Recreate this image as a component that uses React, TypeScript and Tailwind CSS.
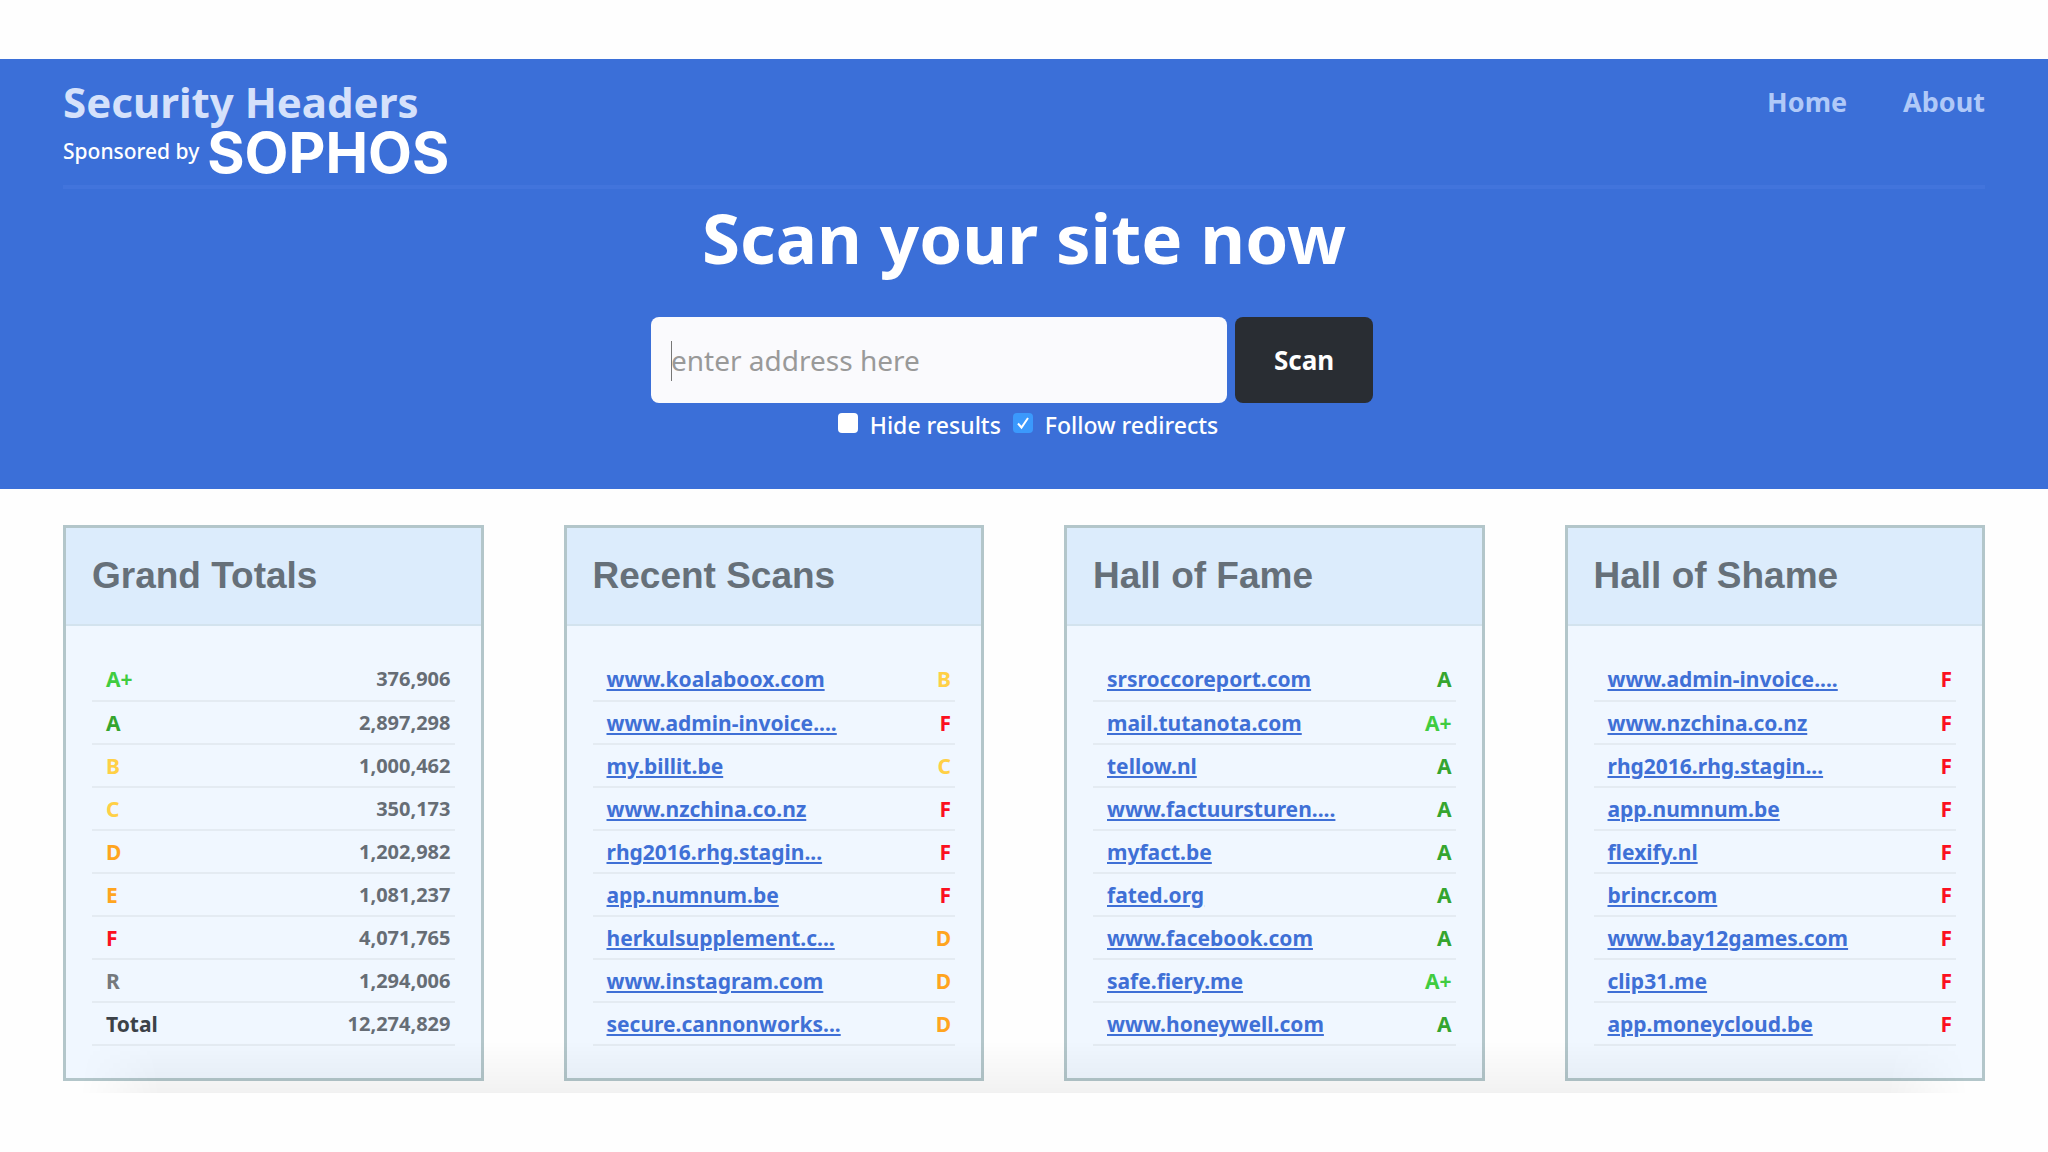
import classNames from 'clsx';

type Grade = 'A+' | 'A' | 'B' | 'C' | 'D' | 'E' | 'F' | 'R' | 'Total';

interface Scan {
  site: string;
  grade: Grade;
}

const gradeColors: Record<Grade, string> = {
  'A+': 'text-[#40cc40]',
  A: 'text-[#35a52f]',
  B: 'text-[#ffd046]',
  C: 'text-[#ffd046]',
  D: 'text-[#ffa51f]',
  E: 'text-[#ffa51f]',
  F: 'text-[#fb1020]',
  R: 'text-[#75797d]',
  Total: 'text-[#3c4248]',
};

const totals: { grade: Grade; count: string }[] = [
  { grade: 'A+', count: '376,906' },
  { grade: 'A', count: '2,897,298' },
  { grade: 'B', count: '1,000,462' },
  { grade: 'C', count: '350,173' },
  { grade: 'D', count: '1,202,982' },
  { grade: 'E', count: '1,081,237' },
  { grade: 'F', count: '4,071,765' },
  { grade: 'R', count: '1,294,006' },
  { grade: 'Total', count: '12,274,829' },
];

const recentScans: Scan[] = [
  { site: 'www.koalaboox.com', grade: 'B' },
  { site: 'www.admin-invoice....', grade: 'F' },
  { site: 'my.billit.be', grade: 'C' },
  { site: 'www.nzchina.co.nz', grade: 'F' },
  { site: 'rhg2016.rhg.stagin...', grade: 'F' },
  { site: 'app.numnum.be', grade: 'F' },
  { site: 'herkulsupplement.c...', grade: 'D' },
  { site: 'www.instagram.com', grade: 'D' },
  { site: 'secure.cannonworks...', grade: 'D' },
];

const hallOfFame: Scan[] = [
  { site: 'srsroccoreport.com', grade: 'A' },
  { site: 'mail.tutanota.com', grade: 'A+' },
  { site: 'tellow.nl', grade: 'A' },
  { site: 'www.factuursturen....', grade: 'A' },
  { site: 'myfact.be', grade: 'A' },
  { site: 'fated.org', grade: 'A' },
  { site: 'www.facebook.com', grade: 'A' },
  { site: 'safe.fiery.me', grade: 'A+' },
  { site: 'www.honeywell.com', grade: 'A' },
];

const hallOfShame: Scan[] = [
  { site: 'www.admin-invoice....', grade: 'F' },
  { site: 'www.nzchina.co.nz', grade: 'F' },
  { site: 'rhg2016.rhg.stagin...', grade: 'F' },
  { site: 'app.numnum.be', grade: 'F' },
  { site: 'flexify.nl', grade: 'F' },
  { site: 'brincr.com', grade: 'F' },
  { site: 'www.bay12games.com', grade: 'F' },
  { site: 'clip31.me', grade: 'F' },
  { site: 'app.moneycloud.be', grade: 'F' },
];

function Card({
  title,
  children,
}: {
  title: string;
  children: React.ReactNode;
}) {
  return (
    <section className="border-3 border-[#b3c6ca] bg-[#f0f7ff]">
      <h2 className="border-b-2 border-[#d3e3ee] bg-[#dcecfc] px-[26px] py-7 font-['Liberation_Sans',sans-serif] text-[37px] leading-10 font-bold text-[#667079]">
        {title}
      </h2>
      <div className="px-[26px] py-8">
        <table className="w-full text-[21px] leading-7 font-bold">
          <tbody>{children}</tbody>
        </table>
      </div>
    </section>
  );
}

function ScanCard({ title, scans }: { title: string; scans: Scan[] }) {
  return (
    <Card title={title}>
      {scans.map(({ site, grade }) => (
        <tr key={site} className="h-[43px] border-b-2 border-[#e4ebf2]">
          <td className="pl-3.5">
            <a href="#" className="text-[#3f70d6] underline">
              {site}
            </a>
          </td>
          <td className={classNames('pr-1 text-right', gradeColors[grade])}>
            {grade}
          </td>
        </tr>
      ))}
    </Card>
  );
}

export default function App() {
  return (
    <div className="min-h-screen bg-[#fefefe] pt-[59px] font-['Noto_Sans',sans-serif]">
      <div className="bg-[#3b6fd8] px-[63px] pt-5 pb-12">
        <header className="flex items-start justify-between border-b-4 border-[#4274dc] pb-1">
          <div>
            <a
              href="#"
              className="block text-[42px] leading-[46px] font-bold text-[#d5e1fb]"
            >
              Security Headers
            </a>
            <div className="flex h-14 items-center gap-2 text-white">
              <span className="pb-1 text-[21px] leading-7 font-medium">
                Sponsored by
              </span>
              <span className="font-['Inter',sans-serif] text-[57px] leading-[54px] font-bold">
                SOPHOS
              </span>
            </div>
          </div>
          <nav className="flex gap-14 text-[27px] leading-[46px] font-bold text-[#b0c9f8]">
            <a href="#">Home</a>
            <a href="#">About</a>
          </nav>
        </header>

        <h1 className="mt-1 text-center text-[69px] leading-[88px] font-bold text-white">
          Scan your site now
        </h1>

        <form
          className="mt-9 flex flex-col items-center"
          onSubmit={(e) => e.preventDefault()}
        >
          <div className="mr-6 flex items-center gap-2">
            <div className="relative">
              <input
                type="text"
                aria-label="Site address"
                placeholder="enter address here"
                className="block h-[86px] w-[576px] rounded-lg bg-[#fafafd] px-5 text-[28px] text-[#333] outline-none placeholder:text-[#999]"
              />
              <span className="pointer-events-none absolute top-6 left-5 h-10 w-px bg-[#777]" />
            </div>
            <button
              type="submit"
              className="h-[86px] w-[138px] rounded-lg bg-[#292d33] text-[26px] font-bold text-white"
            >
              Scan
            </button>
          </div>
          <div className="mt-1.5 ml-2 flex items-center gap-3 text-[23px] leading-8 font-medium text-white">
            <label className="flex items-center gap-3">
              <input
                type="checkbox"
                className="mb-1 size-5 appearance-none rounded bg-white"
              />
              Hide results
            </label>
            <label className="flex items-center gap-3">
              <span className="relative mb-1 flex">
                <input
                  type="checkbox"
                  defaultChecked
                  className="size-5 appearance-none rounded bg-[#3b99fc]"
                />
                <svg
                  viewBox="0 0 20 20"
                  className="pointer-events-none absolute inset-0 size-5"
                  fill="none"
                  stroke="#fff"
                  strokeWidth="2"
                >
                  <path d="M5 10.5 8.5 14.5 15 5" />
                </svg>
              </span>
              Follow redirects
            </label>
          </div>
        </form>
      </div>

      <main className="relative mt-9">
        <div className="grid grid-cols-4 gap-20 px-[63px]">
          <Card title="Grand Totals">
            {totals.map(({ grade, count }) => (
              <tr key={grade} className="h-[43px] border-b-2 border-[#e4ebf2]">
                <td className={classNames('pl-3.5', gradeColors[grade])}>
                  {grade}
                </td>
                <td className="pr-1 text-right text-xl text-[#666d75]">
                  {count}
                </td>
              </tr>
            ))}
          </Card>
          <ScanCard title="Recent Scans" scans={recentScans} />
          <ScanCard title="Hall of Fame" scans={hallOfFame} />
          <ScanCard title="Hall of Shame" scans={hallOfShame} />
        </div>
        <div className="pointer-events-none absolute inset-x-20 -bottom-3 h-13 bg-linear-to-t from-black/5 to-transparent [mask-image:linear-gradient(to_right,transparent,black_80px,black_calc(100%-80px),transparent)]" />
      </main>
    </div>
  );
}
